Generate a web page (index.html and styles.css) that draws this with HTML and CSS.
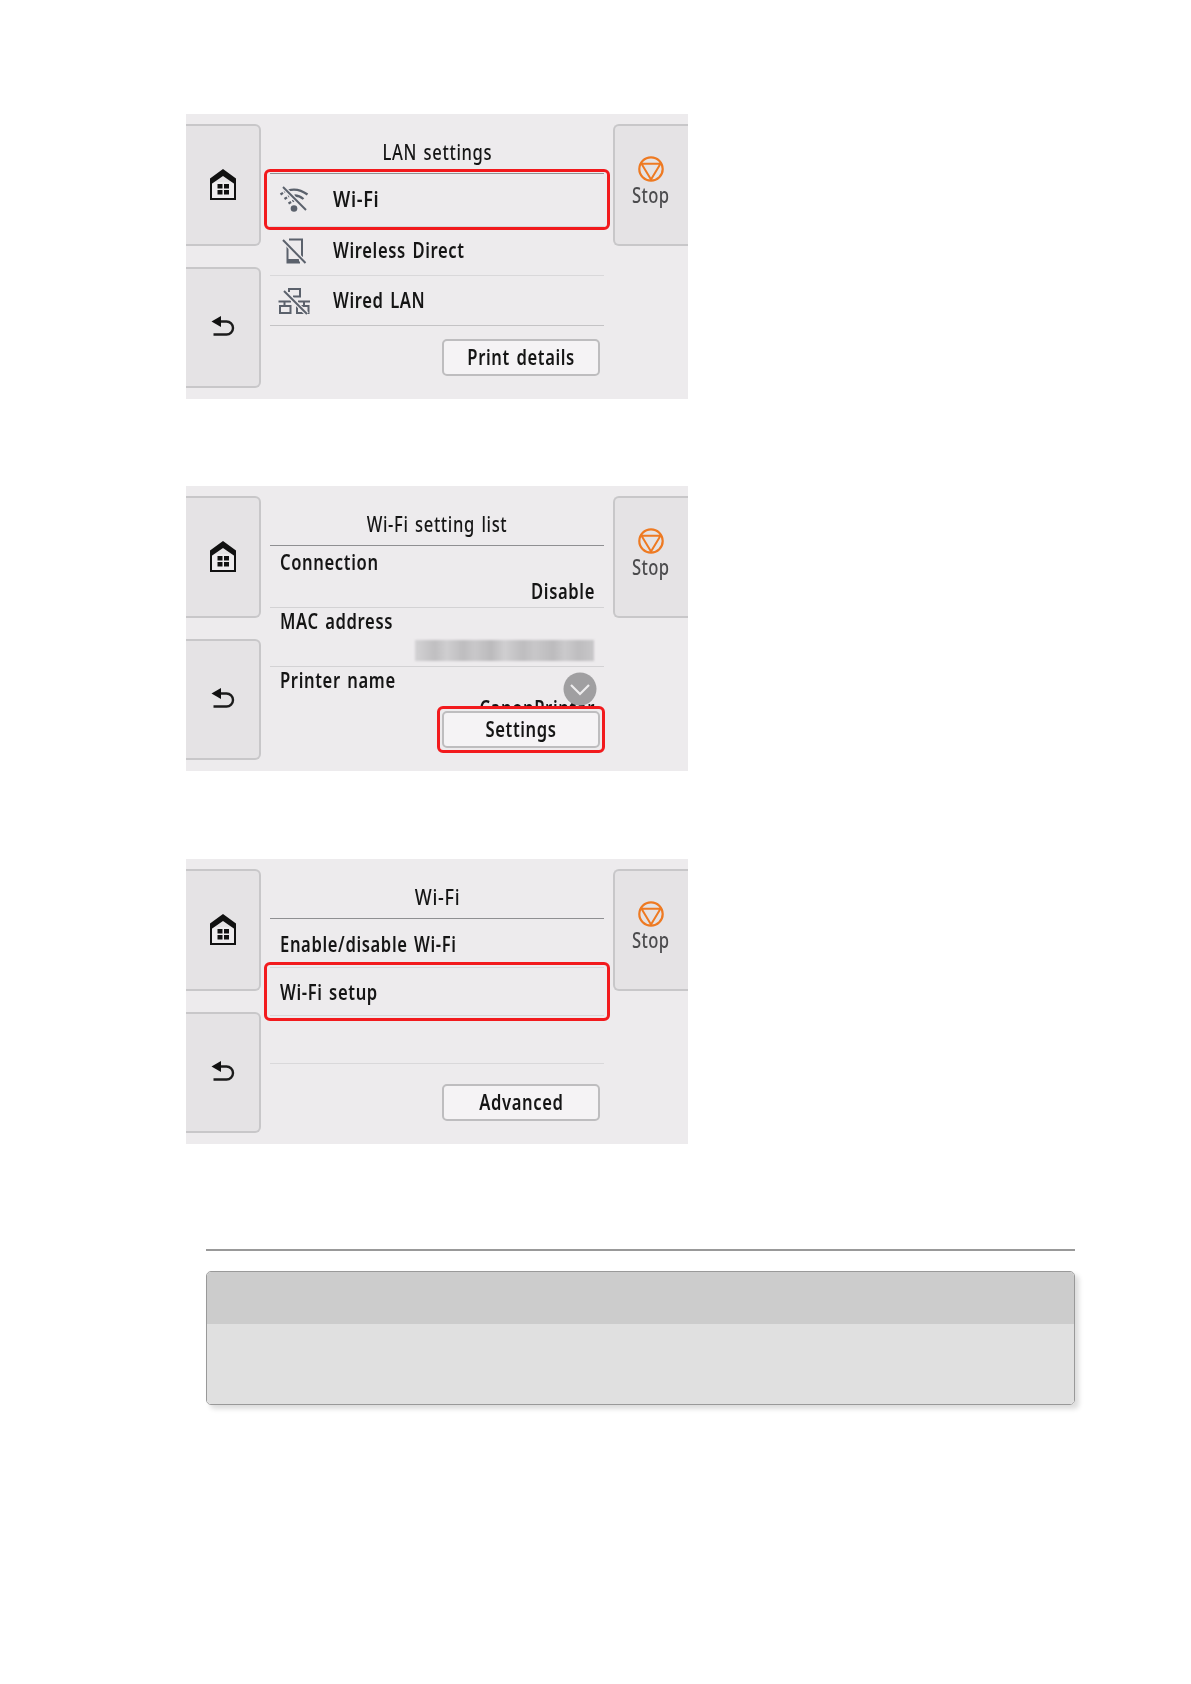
FILE: index.html
```html
<!DOCTYPE html>
<html lang="en">
<head>
  <meta charset="UTF-8">
  <meta name="viewport" content="width=device-width, initial-scale=1.0">
  <title>LAN settings</title>
  <link rel="stylesheet" href="styles.css">
</head>
<body>
  <!-- Shared icons -->
  <svg class="sprite">
    <symbol id="home" viewBox="0 0 28 32">
      <path d="M2 13V30H26V13" fill="#eeecee" stroke="#111" stroke-width="2"/>
      <path d="M14 0L27 9.500V16L14 7L1 16V9.500Z" fill="#111"/>
      <path d="M8.5 15h5v4.5h-5zM15 15h5v4.5h-5zM8.5 21h5v4.5h-5zM15 21h5v4.5h-5z" fill="#111"/>
    </symbol>
    <symbol id="back" viewBox="0 0 24 20">
      <path d="M8 5.5H15.500A6.500 6.500 0 0 1 15.500 18.500H2.500" fill="none" stroke="#1c1c1c" stroke-width="2.400"/>
      <path d="M0.500 5.500L10 0V11Z" fill="#111"/>
    </symbol>
    <symbol id="stop" viewBox="0 0 26 26">
      <circle cx="13" cy="13" r="11.700" fill="none" stroke="#ee7a22" stroke-width="2.200"/>
      <path d="M3.500 7.700H22.500L13 23.500Z" fill="none" stroke="#ee7a22" stroke-width="2" stroke-linejoin="round"/>
    </symbol>
  </svg>

  <main class="page">
    <section class="panel">
      <div class="side">
        <div class="tab"><svg class="icon-home"><use href="#home"/></svg></div>
        <div class="tab tab-back"><svg class="icon-back"><use href="#back"/></svg></div>
      </div>
      <div class="content">
        <h2 class="title"><span class="text text-center">LAN settings</span></h2>
        <div class="row row-wifi">
          <div class="highlight"></div>
          <svg class="icon" viewBox="0 0 32 28" fill="none" stroke="#5b616c" stroke-width="2.300">
            <path d="M10 4.500Q20 1.500 29.500 8.500M16.500 9.500Q21.500 9.500 25.500 13"/>
            <path d="M2.500 8.500L7 5.500M6.500 13L11 10M10.500 17.500L16 14.500" stroke-dasharray="3 1.500"/>
            <path d="M5 1L28 24" stroke="#edebed" stroke-width="4.500"/>
            <path d="M5 1L28 24" stroke-width="2"/>
            <circle cx="16" cy="22.500" r="3.300" fill="#5b616c" stroke="none"/>
          </svg>
          <span class="text text-wide">Wi-Fi</span>
        </div>
        <div class="row row-direct">
          <svg class="icon" viewBox="0 0 32 28" fill="none" stroke="#5b616c" stroke-width="2">
            <path d="M11 2.500H24V20M9.500 9V25.500H22"/>
            <path d="M10 23.500H21" stroke-width="3"/>
            <path d="M5 3L27.500 26" stroke="#edebed" stroke-width="4.500"/>
            <path d="M5 3L27.500 26"/>
          </svg>
          <span class="text">Wireless Direct</span>
        </div>
        <div class="row row-wired">
          <svg class="icon" viewBox="0 0 32 28" fill="none" stroke="#5b616c" stroke-width="2">
            <path d="M11 5V2H22V9.500H15M0.500 14.500H13M6.500 14.500V19M2 19H12.500V26H2ZM20 14.500H32M26 14.500V19M21 19H30.500V26H19V19"/>
            <path d="M6 4L29 27" stroke="#edebed" stroke-width="4.500"/>
            <path d="M6 4L29 27"/>
          </svg>
          <span class="text">Wired LAN</span>
        </div>
        <div class="actions"><button class="btn"><span class="text text-center">Print details</span></button></div>
      </div>
      <div class="side">
        <div class="tab tab-stop"><svg class="icon-stop"><use href="#stop"/></svg><span class="text text-center">Stop</span></div>
      </div>
    </section>

    <section class="panel">
      <div class="side">
        <div class="tab"><svg class="icon-home"><use href="#home"/></svg></div>
        <div class="tab tab-back"><svg class="icon-back"><use href="#back"/></svg></div>
      </div>
      <div class="content">
        <h2 class="title"><span class="text text-center">Wi-Fi setting list</span></h2>
        <div class="item item-first">
          <span class="text">Connection</span>
          <span class="text value">Disable</span>
        </div>
        <div class="item">
          <span class="text">MAC address</span>
          <div class="masked"></div>
        </div>
        <div class="item item-cut">
          <span class="text">Printer name</span>
          <span class="text value">CanonPrinter</span>
          <svg class="scroll-down" viewBox="0 0 34 34">
            <circle cx="17" cy="17" r="16.500" fill="#a09fa1"/>
            <path d="M8 13L17 22L26 13" fill="none" stroke="#eeecee" stroke-width="2.200"/>
          </svg>
        </div>
        <div class="actions actions-list">
          <button class="btn"><span class="text text-center">Settings</span><i class="highlight"></i></button>
        </div>
      </div>
      <div class="side">
        <div class="tab tab-stop"><svg class="icon-stop"><use href="#stop"/></svg><span class="text text-center">Stop</span></div>
      </div>
    </section>

    <section class="panel panel-last">
      <div class="side">
        <div class="tab"><svg class="icon-home"><use href="#home"/></svg></div>
        <div class="tab tab-back"><svg class="icon-back"><use href="#back"/></svg></div>
      </div>
      <div class="content">
        <h2 class="title"><span class="text text-center text-wide">Wi-Fi</span></h2>
        <div class="row row-plain row-enable"><span class="text">Enable/disable Wi-Fi</span></div>
        <div class="row row-plain"><div class="highlight"></div><span class="text">Wi-Fi setup</span></div>
        <div class="row row-plain"></div>
        <div class="actions actions-low"><button class="btn"><span class="text text-center">Advanced</span></button></div>
      </div>
      <div class="side">
        <div class="tab tab-stop"><svg class="icon-stop"><use href="#stop"/></svg><span class="text text-center">Stop</span></div>
      </div>
    </section>

    <hr class="divider">
    <div class="note">
      <div class="note-head"></div>
      <div class="note-body"></div>
    </div>
  </main>
</body>
</html>
```

FILE: styles.css
```css
* {
  box-sizing: border-box;
}
body {
  margin: 0;
  background: #fff;
  color: #151515;
  font-family: "Noto Sans", "Open Sans", sans-serif;
  font-size: 21px;
  font-weight: 560;
  letter-spacing: 0.8px;
  word-spacing: 2px;
  line-height: 24px;
}
.sprite {
  display: none;
}
/* Narrow display lettering */
.text {
  display: inline-block;
  white-space: nowrap;
  transform: scaleX(0.79);
  transform-origin: left;
}
.text-wide {
  transform: scaleX(0.86);
}
.text-center {
  transform-origin: center;
}
.page {
  min-height: 1684px;
  padding: 114px 116px 0 186px;
}
.panel {
  display: flex;
  width: 502px;
  height: 285px;
  margin-bottom: 87px;
  background: #edebed;
}
.panel-last {
  margin-top: 88px;
}
.side {
  display: flex;
  flex-direction: column;
  gap: 21px;
  width: 75px;
  padding-top: 10px;
}
.tab {
  display: flex;
  flex-direction: column;
  align-items: center;
  justify-content: center;
  height: 122px;
  background: #e5e3e5;
  border: 2px solid #c8c7c9;
  border-left: none;
  border-radius: 0 6px 6px 0;
}
.tab-back {
  height: 121px;
  padding-bottom: 3px;
}
.tab-stop {
  justify-content: flex-start;
  padding: 30px 2px 0 0;
  color: #4b4b4d;
  font-weight: 500;
  letter-spacing: 0.5px;
  border-left: 2px solid #c8c7c9;
  border-right: none;
  border-radius: 6px 0 0 6px;
}
.tab-stop span {
  margin: 1px 0 0 1px;
}
.icon-home {
  width: 28px;
  height: 32px;
}
.icon-back {
  width: 24px;
  height: 20px;
}
.icon-stop {
  width: 26px;
  height: 26px;
}
.content {
  width: 352px;
  padding: 0 9px;
}
.title {
  height: 60px;
  margin: 0;
  padding-top: 26px;
  border-bottom: 1px solid #8f8f92;
  font-size: inherit;
  font-weight: 500;
  text-align: center;
}

/* Menu rows */
.row {
  position: relative;
  display: flex;
  align-items: center;
  gap: 23px;
  padding-left: 8px;
  border-bottom: 1px solid #d9d8da;
}
.row span {
  padding-bottom: 2px;
}
.row-wifi {
  height: 53px;
}
.row-direct {
  height: 49px;
}
.row-wired {
  height: 50px;
  border-color: #c4c3c5;
}
.icon {
  width: 32px;
  height: 28px;
}
.row-plain {
  height: 48px;
  padding-left: 10px;
}
.row-plain span {
  padding-bottom: 0;
}
.row-enable {
  height: 49px;
  padding-top: 1px;
}
.highlight {
  position: absolute;
  top: -5px;
  right: -6px;
  bottom: -4px;
  left: -6px;
  border: 3px solid #f21a1d;
  border-radius: 6px;
}
.row-plain .highlight {
  top: -6px;
  bottom: -6px;
}

/* Label and value list */
.item {
  position: relative;
  display: flex;
  flex-direction: column;
  height: 59px;
  padding: 1px 10px 0;
  border-bottom: 1px solid #d3d2d4;
}
.item-first {
  height: 62px;
  padding-top: 4px;
}
.value {
  margin-top: 5px;
  margin-right: -1px;
  text-align: right;
  transform-origin: right;
}
.masked {
  width: 179px;
  height: 21px;
  margin: 7px 0 0 auto;
  background: linear-gradient(90deg, #d3d2d4 0, #c0bfc1 20px, #cfced0 32px, #bebdbf 48px, #c9c8ca 60px, #bbbabc 76px, #d0cfd1 90px, #bebdbf 108px, #c8c7c9 120px, #bcbbbd 138px, #cbcacc 150px, #bebdbf 164px, #c8c7c9 179px);
  filter: blur(1px);
}
.item-cut {
  height: 41px;
  overflow: hidden;
  border: none;
}
.item-cut .value {
  margin-top: 4px;
}
.scroll-down {
  position: absolute;
  top: 5px;
  right: 7px;
  width: 34px;
  height: 34px;
}

.actions {
  display: flex;
  justify-content: flex-end;
  padding: 13px 4px 0 0;
}
.actions-list {
  padding-top: 3px;
}
.actions-low {
  padding-top: 20px;
}
.btn {
  position: relative;
  width: 158px;
  height: 37px;
  padding: 0 0 2px;
  background: #f5f3f5;
  border: 2px solid #bebdbf;
  border-radius: 5px;
  color: inherit;
  font: inherit;
  letter-spacing: inherit;
  word-spacing: inherit;
}
.btn .highlight {
  inset: -7px;
}

.divider {
  height: 2px;
  margin: 105px 0 20px 20px;
  background: #999;
  border: none;
}
.note {
  margin-left: 20px;
  overflow: hidden;
  border: 1px solid #999;
  border-radius: 5px;
  box-shadow: 4px 4px 5px #ddd;
}
.note-head {
  height: 52px;
  background: #ccc;
}
.note-body {
  height: 80px;
  background: #e0e0e0;
}
```
